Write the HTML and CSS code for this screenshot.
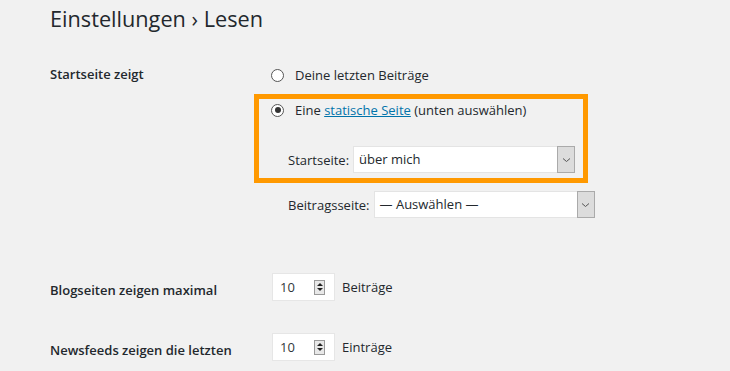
FILE: index.html
```html
<!DOCTYPE html>
<html lang="de">
<head>
<meta charset="utf-8">
<title>Einstellungen › Lesen</title>
<link rel="stylesheet" href="styles.css">
</head>
<body>
<div class="wrap">
  <h1 class="title">Einstellungen › Lesen</h1>

  <div class="row row-front">
    <div class="label">Startseite zeigt</div>
    <div class="field">
      <div class="radio-line first">
        <span class="radio"></span>
        <span>Deine letzten Beiträge</span>
      </div>
      <div class="highlight">
        <div class="radio-line">
          <span class="radio checked"></span>
          <span>Eine <a href="#" class="link">statische Seite</a> (unten auswählen)</span>
        </div>
        <div class="select-line">
          <span class="select-label">Startseite:</span>
          <div class="select sel-front">
            <span class="select-value">über mich</span>
            <span class="select-btn"><svg width="9" height="6" viewBox="0 0 9 6"><path d="M1 1.5 L4.5 4.5 L8 1.5" fill="none" stroke="#555" stroke-width="1"/></svg></span>
          </div>
        </div>
      </div>
      <div class="select-line posts">
        <span class="select-label">Beitragsseite:</span>
        <div class="select sel-posts">
          <span class="select-value">— Auswählen —</span>
          <span class="select-btn"><svg width="9" height="6" viewBox="0 0 9 6"><path d="M1 1.5 L4.5 4.5 L8 1.5" fill="none" stroke="#555" stroke-width="1"/></svg></span>
        </div>
      </div>
    </div>
  </div>

  <div class="row row-num first-num">
    <div class="label">Blogseiten zeigen maximal</div>
    <div class="field num-field">
      <div class="number">
        <span class="num-value">10</span>
        <span class="spin"><span class="up"></span><span class="down"></span></span>
      </div>
      <span class="unit">Beiträge</span>
    </div>
  </div>

  <div class="row row-num second-num">
    <div class="label">Newsfeeds zeigen die letzten</div>
    <div class="field num-field">
      <div class="number">
        <span class="num-value">10</span>
        <span class="spin"><span class="up"></span><span class="down"></span></span>
      </div>
      <span class="unit">Einträge</span>
    </div>
  </div>
</div>
</body>
</html>
```

FILE: styles.css
```css
html, body {
  margin: 0;
  padding: 0;
  background: #f1f1f1;
}
body {
  font-family: "Open Sans", "Noto Sans", "Liberation Sans", sans-serif;
  font-size: 13px;
  color: #23282d;
  overflow: hidden;
}
.wrap {
  padding-left: 50px;
}
.title {
  margin: 0;
  padding-top: 4px;
  font-size: 21.7px;
  font-weight: 400;
  line-height: 30px;
  color: #23282d;
}
.row {
  display: grid;
  grid-template-columns: 221px 1fr;
}
.label {
  font-weight: 600;
  font-size: 13px;
  line-height: 20px;
}
.row-front {
  margin-top: 30px;
}
.radio-line {
  display: flex;
  align-items: center;
  gap: 11px;
  height: 20px;
  line-height: 20px;
}
.radio-line.first {
  margin-top: 1px;
}
.radio {
  width: 11px;
  height: 11px;
  border: 1px solid #555;
  border-radius: 50%;
  background: #fff;
  position: relative;
  flex: none;
}
.radio.checked::after {
  content: "";
  position: absolute;
  left: 2.5px;
  top: 2.5px;
  width: 6px;
  height: 6px;
  border-radius: 50%;
  background: #333;
}
.link {
  color: #0073aa;
  text-decoration: underline;
}
.highlight {
  margin-top: 9px;
  margin-left: -17px;
  width: 334px;
  box-sizing: border-box;
  border: 5px solid #ff9900;
  padding: 1px 0 5px 12px;
}
.select-line {
  display: flex;
  align-items: center;
  gap: 4px;
  padding-left: 17px;
}
.highlight .select-line {
  margin-top: 26px;
}
.select-label {
  line-height: 20px;
}
.select {
  display: flex;
  height: 27px;
  background: #fff;
  box-sizing: border-box;
  border: 1px solid #e4e4e4;
}
.sel-front {
  width: 222px;
}
.select-line.posts {
  margin-top: 8px;
}
.sel-posts {
  width: 221px;
}
.select-value {
  flex: 1;
  padding-left: 5px;
  line-height: 25px;
}
.select-btn {
  width: 16px;
  margin: -1px -1px -1px 0;
  border: 1px solid #aaa;
  background: #dcdcdc;
  display: flex;
  align-items: center;
  justify-content: center;
}
.row-num {
  align-items: start;
}
.row-num .label {
  padding-top: 7px;
}
.first-num {
  margin-top: 55px;
}
.second-num {
  margin-top: 32px;
}
.num-field {
  display: flex;
  align-items: center;
  gap: 7px;
  margin-left: 1px;
}
.number {
  width: 63px;
  height: 28px;
  box-sizing: border-box;
  background: #fff;
  border: 1px solid #e6e6e6;
  display: flex;
  align-items: center;
  padding-left: 7px;
}
.num-value {
  flex: 1;
  color: #32373c;
}
.spin {
  width: 11px;
  height: 15px;
  margin-right: 9px;
  border: 1px solid #999;
  background: #e8e8e8;
  display: flex;
  flex-direction: column;
  align-items: center;
  justify-content: space-around;
  box-sizing: border-box;
  padding: 2px 0;
}
.up {
  width: 0;
  height: 0;
  border-left: 3px solid transparent;
  border-right: 3px solid transparent;
  border-bottom: 3px solid #222;
}
.down {
  width: 0;
  height: 0;
  border-left: 3px solid transparent;
  border-right: 3px solid transparent;
  border-top: 3px solid #222;
}
.unit {
  line-height: 20px;
}
```
